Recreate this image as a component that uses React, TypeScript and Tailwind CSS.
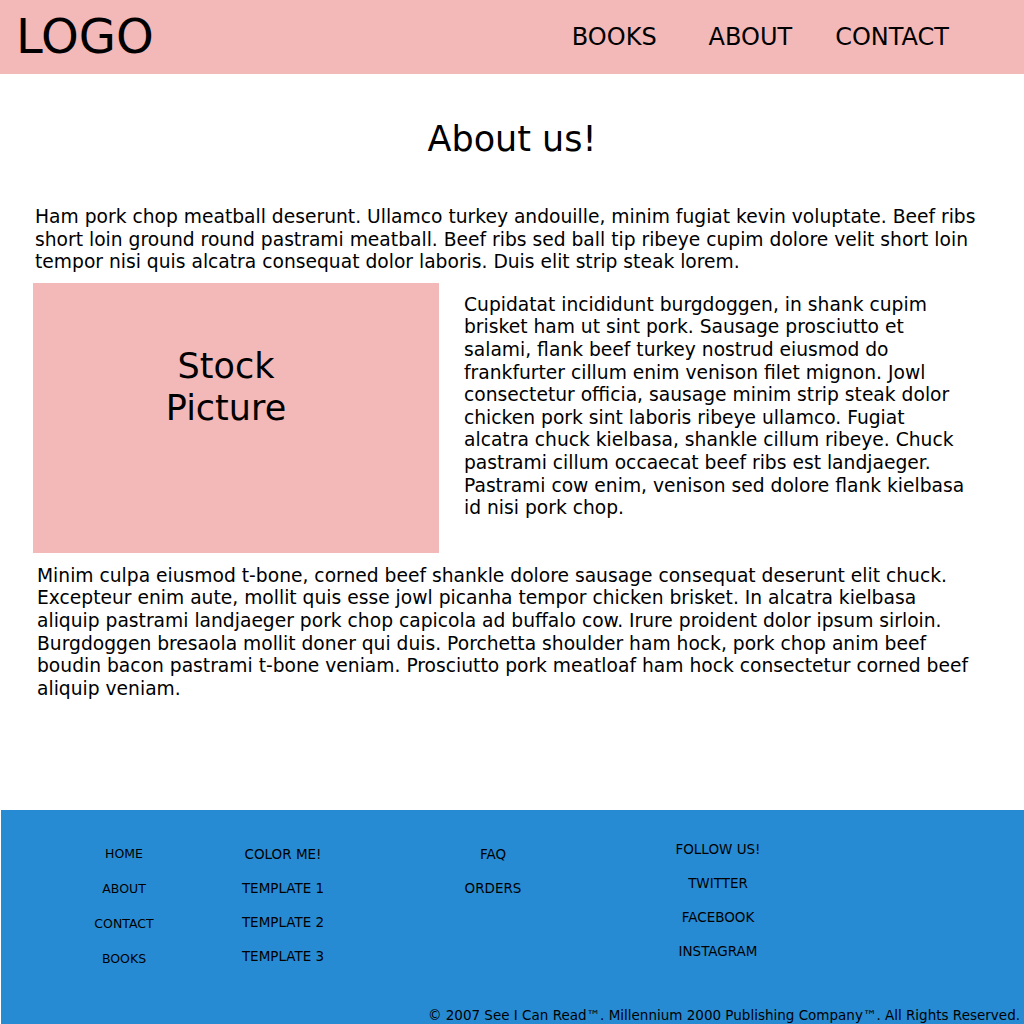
const font = { fontFamily: '"DejaVu Sans", Verdana, sans-serif' }

const footerCols = [
  { key: 'site', className: 'w-[120px] ml-[63px] gap-[17px] pt-[35px] text-[12.5px]', items: ['HOME', 'ABOUT', 'CONTACT', 'BOOKS'] },
  { key: 'templates', className: 'w-[130px] ml-[34px] gap-[16px] pt-[35px] text-[13.5px]', items: ['COLOR ME!', 'TEMPLATE 1', 'TEMPLATE 2', 'TEMPLATE 3'] },
  { key: 'help', className: 'w-[100px] ml-[95px] gap-[16px] pt-[35px] text-[13.5px]', items: ['FAQ', 'ORDERS'] },
  { key: 'social', className: 'w-[120px] ml-[115px] gap-[16px] pt-[30px] text-[13.5px]', items: ['FOLLOW US!', 'TWITTER', 'FACEBOOK', 'INSTAGRAM'] },
]

export default function App() {
  return (
    <div className="w-[1024px] min-h-[1024px] bg-white text-black flex flex-col" style={font}>
      {/* header */}
      <header className="h-[74px] bg-[#f3b8b8] flex items-center">
        <div className="pl-[16px] text-[48px] leading-none -mt-[2px]">LOGO</div>
        <nav className="ml-auto mr-[75px] flex items-center text-[24px] leading-none">
          <a className="mr-[52px]">BOOKS</a>
          <a className="mr-[43px]">ABOUT</a>
          <a>CONTACT</a>
        </nav>
      </header>

      {/* main */}
      <main className="h-[736px] text-[18.7px] leading-[22.6px]">
        <h1 className="pt-[45px] text-center text-[35px] leading-[40px]">About us!</h1>
        <p className="mt-[47px] ml-[35px] mr-[30px]">
          Ham pork chop meatball deserunt. Ullamco turkey andouille, minim fugiat kevin voluptate. Beef ribs short loin
          ground round pastrami meatball. Beef ribs sed ball tip ribeye cupim dolore velit short loin tempor nisi quis
          alcatra consequat dolor laboris. Duis elit strip steak lorem.
        </p>
        <div className="mt-[9px] ml-[33px] flex">
          <div className="w-[406px] h-[270px] bg-[#f3b8b8] flex justify-center pt-[62px] pr-[20px] text-[35px] leading-[42px] text-center">
            Stock
            <br />
            Picture
          </div>
          <p className="ml-[25px] w-[510px] pt-[11px]">
            Cupidatat incididunt burgdoggen, in shank cupim brisket ham ut sint pork. Sausage prosciutto et salami, flank
            beef turkey nostrud eiusmod do frankfurter cillum enim venison filet mignon. Jowl consectetur officia,
            sausage minim strip steak dolor chicken pork sint laboris ribeye ullamco. Fugiat alcatra chuck kielbasa,
            shankle cillum ribeye. Chuck pastrami cillum occaecat beef ribs est landjaeger. Pastrami cow enim, venison
            sed dolore flank kielbasa id nisi pork chop.
          </p>
        </div>
        <p className="mt-[12px] ml-[37px] mr-[40px]">
          Minim culpa eiusmod t-bone, corned beef shankle dolore sausage consequat deserunt elit chuck. Excepteur enim
          aute, mollit quis esse jowl picanha tempor chicken brisket. In alcatra kielbasa aliquip pastrami landjaeger pork
          chop capicola ad buffalo cow. Irure proident dolor ipsum sirloin. Burgdoggen bresaola mollit doner qui duis.
          Porchetta shoulder ham hock, pork chop anim beef boudin bacon pastrami t-bone veniam. Prosciutto pork meatloaf
          ham hock consectetur corned beef aliquip veniam.
        </p>
      </main>

      {/* footer */}
      <footer className="ml-px h-[214px] bg-[#278bd4] flex flex-col">
        <div className="flex flex-1">
          {footerCols.map(col => (
            <ul key={col.key} className={`flex flex-col items-center leading-[18px] ${col.className}`}>
              {col.items.map(item => (
                <li key={item}>{item}</li>
              ))}
            </ul>
          ))}
        </div>
        <div className="text-right pr-[4px] text-[13.5px] leading-[18px]">
          © 2007 See I Can Read™. Millennium 2000 Publishing Company™. All Rights Reserved.
        </div>
      </footer>
    </div>
  )
}
